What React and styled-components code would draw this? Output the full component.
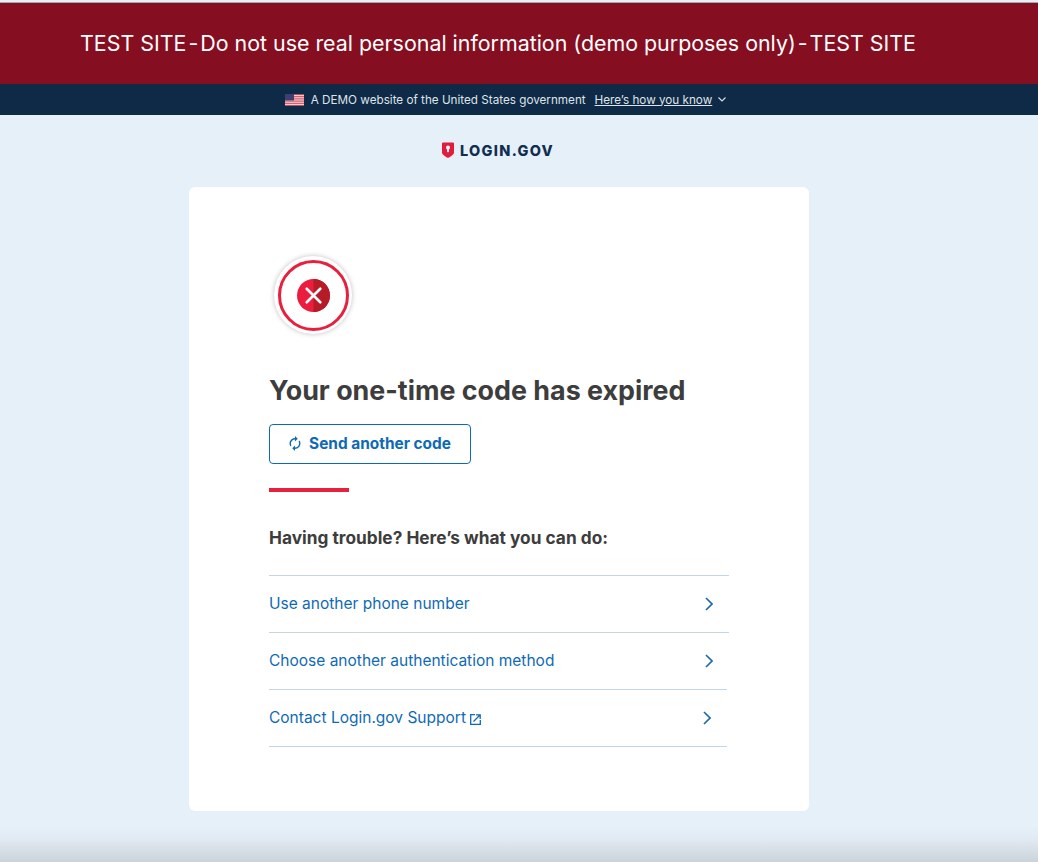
import styled, { createGlobalStyle } from "styled-components";

const GlobalStyle = createGlobalStyle`
    * {
        box-sizing: border-box;
    }
    html, body {
        margin: 0;
        padding: 0;
        height: 862px;
        overflow: hidden;
    }
    body {
        font-family: "Inter", "Liberation Sans", sans-serif;
    }
`

const troubleLinks = [
    { label: "Use another phone number" },
    { label: "Choose another authentication method" },
    { label: "Contact Login.gov Support", external: true, last: true },
];

function Flag () {
    const stripes = [0, 2, 4, 6, 8, 10, 12];
    return (
        <svg width="19" height="12" viewBox="0 0 19 13" preserveAspectRatio="none">
            <rect width="19" height="13" fill="#f4eff0" />
            {stripes.map(y => <rect key={y} y={y} width="19" height="1" fill="#c8384a" />)}
            <rect width="9" height="7" fill="#3c3f72" />
        </svg>
    )
}

function Shield () {
    return (
        <svg width="12" height="16" viewBox="0 0 12 15" preserveAspectRatio="none">
            <path d="M1 0.500h10a1 1 0 0 1 1 1V10c0 1.600-3.600 3.800-6 5-2.400-1.200-6-3.400-6-5V1.500a1 1 0 0 1 1-1z" fill="#e21c3d" />
            <circle cx="6" cy="5.200" r="2" fill="#fff" />
            <rect x="5.100" y="5.500" width="1.800" height="4" fill="#fff" />
        </svg>
    )
}

function ErrorBadge () {
    return (
        <svg width="33" height="33" viewBox="0 0 34 34">
            <circle cx="17" cy="17" r="17" fill="#ec1c3e" />
            <path d="M17 0a17 17 0 0 1 0 34z" fill="#b51c27" />
            <path d="M10 10l14 14M24 10l-14 14" stroke="#fff" strokeWidth="2.700" strokeLinecap="round" />
        </svg>
    )
}

function ResendIcon () {
    return (
        <svg width="12" height="15" viewBox="4 1 16 22" fill="#0f6ab5">
            <path d="M12 6v3l4-4-4-4v3c-4.420 0-8 3.580-8 8 0 1.570.460 3.030 1.240 4.260L6.700 14.800c-.450-.830-.700-1.790-.700-2.800 0-3.310 2.690-6 6-6zm6.760 1.740L17.300 9.200c.440.840.700 1.790.700 2.800 0 3.310-2.690 6-6 6v-3l-4 4 4 4v-3c4.420 0 8-3.580 8-8 0-1.570-.460-3.030-1.240-4.260z" />
        </svg>
    )
}

function ExternalIcon () {
    return (
        <svg width="11" height="11" viewBox="0 0 11 11" fill="none" stroke="#0f6ab5" strokeWidth="1.300">
            <path d="M5 0.700H0.700v9.600h9.600V6" />
            <path d="M3.500 7.500L9.500 1.500M6 0.800h4.200V5" />
        </svg>
    )
}

function Chevron () {
    return (
        <svg width="8" height="14" viewBox="0 0 8 14" fill="none" stroke="#1d68a8" strokeWidth="1.600">
            <path d="M1 1l6 6-6 6" />
        </svg>
    )
}

export default function App () {
    return (
        <>
            <GlobalStyle />
            <Page>
                <TestBanner>
                    <span>TEST SITE<Dash> - </Dash>Do not use real personal information (demo purposes only)<Dash> - </Dash>TEST SITE</span>
                </TestBanner>
                <GovBanner>
                    <Flag />
                    <GovText>A DEMO website of the United States government</GovText>
                    <GovLink>Here’s how you know</GovLink>
                    <svg width="8" height="5" viewBox="0 0 8 5" fill="none" stroke="#dfe3e8" strokeWidth="1.100">
                        <path d="M0.500 0.500L4 4l3.500-3.500" />
                    </svg>
                </GovBanner>
                <LogoRow>
                    <Shield />
                    <LogoText>LOGIN.GOV</LogoText>
                </LogoRow>
                <Card>
                    <IconCircle>
                        <IconRing>
                            <ErrorBadge />
                        </IconRing>
                    </IconCircle>
                    <Title>Your one-time code has expired</Title>
                    <ResendButton>
                        <ResendIcon />
                        Send another code
                    </ResendButton>
                    <Accent />
                    <SubTitle>Having trouble? Here’s what you can do:</SubTitle>
                    <LinkList>
                        {troubleLinks.map(link => (
                            <LinkRow key={link.label} $last={link.last}>
                                <LinkLabel>
                                    {link.label}
                                    {link.external && <ExternalIcon />}
                                </LinkLabel>
                                <Chevron />
                            </LinkRow>
                        ))}
                    </LinkList>
                </Card>
            </Page>
        </>
    )
}

const Page = styled.div`
    height: 862px;
    overflow: hidden;
    padding-top: 2px;
    display: flex;
    flex-direction: column;
    background: linear-gradient(to bottom, #e5f0f9 0, #e5f0f9 825px, #e2ebf3 838px, #cbd3da 862px);
`
const TestBanner = styled.div`
    height: 82px;
    flex-shrink: 0;
    border-top: 1px solid #a8a8a8;
    background-color: #860e21;
    color: #ffffff;
    display: flex;
    align-items: center;
    padding-left: 80px;
    padding-bottom: 1px;
    font-size: 21.400px;
    white-space: pre;
`
const Dash = styled.span`
    word-spacing: -4px;
`
const GovBanner = styled.div`
    height: 31px;
    flex-shrink: 0;
    background-color: #0e2a47;
    color: #dfe3e8;
    display: flex;
    align-items: center;
    justify-content: center;
    font-size: 11.700px;
    padding-right: 27px;
    svg:last-child {
        margin-left: 6px;
    }
`
const GovText = styled.span`
    margin-left: 7px;
`
const GovLink = styled.span`
    margin-left: 9px;
    text-decoration: underline;
`
const LogoRow = styled.div`
    height: 70px;
    margin-bottom: 2px;
    flex-shrink: 0;
    display: flex;
    align-items: center;
    justify-content: center;
    gap: 6px;
    padding-right: 42px;
`
const LogoText = styled.span`
    font-weight: 800;
    font-size: 14.500px;
    letter-spacing: 1.300px;
    color: #112e51;
`
const Card = styled.main`
    width: 620px;
    height: 624px;
    flex-shrink: 0;
    margin-left: 189px;
    background-color: #ffffff;
    border-radius: 6px;
    padding: 69px 80px 0;
`
const IconCircle = styled.div`
    width: 78px;
    height: 78px;
    margin-left: 5px;
    border-radius: 50%;
    background-color: #ffffff;
    box-shadow: 0 0 5px rgba(0, 0, 0, 0.25);
    display: flex;
    align-items: center;
    justify-content: center;
`
const IconRing = styled.div`
    width: 71px;
    height: 71px;
    border-radius: 50%;
    border: 3px solid #e8203f;
    display: flex;
    align-items: center;
    justify-content: center;
`
const Title = styled.h1`
    margin: 38px 0 0;
    font-size: 26.850px;
    line-height: 36px;
    font-weight: 700;
    color: #3d3d3d;
    white-space: nowrap;
`
const ResendButton = styled.button`
    margin-top: 16px;
    width: 202px;
    height: 40px;
    display: flex;
    align-items: center;
    justify-content: center;
    gap: 8px;
    font-family: inherit;
    font-size: 15.400px;
    font-weight: 700;
    color: #0f6ab5;
    background-color: #ffffff;
    border: 1px solid #0f6ab5;
    border-radius: 4px;
    padding: 0 0 1px;
`
const Accent = styled.div`
    margin-top: 24px;
    width: 80px;
    height: 4px;
    background-color: #e8203f;
`
const SubTitle = styled.h2`
    margin: 34px 0 0;
    font-size: 17.300px;
    line-height: 24px;
    font-weight: 700;
    color: #3d3d3d;
`
const LinkList = styled.div`
    margin-top: 25px;
    display: flex;
    flex-direction: column;
`
const LinkRow = styled.div`
    width: ${props => props.$last ? "458px" : "460px"};
    height: ${props => props.$last ? "58px" : "57px"};
    border-top: 1px solid #c2d6e8;
    border-bottom: ${props => props.$last ? "1px solid #c2d6e8" : "none"};
    display: flex;
    align-items: center;
    justify-content: space-between;
    padding-right: 16px;
    color: #0f6ab5;
`
const LinkLabel = styled.span`
    display: flex;
    align-items: center;
    gap: 4px;
    font-size: 15.500px;
    margin-top: -1px;
    svg {
        margin-top: 3px;
    }
`
